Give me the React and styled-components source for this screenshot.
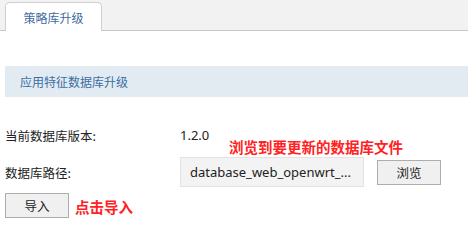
import React from "react";
import styled, { createGlobalStyle } from "styled-components";

const Global = createGlobalStyle`
  html, body { margin: 0; padding: 0; background: #fff; }
  body { font-family: "Noto Sans", "Noto Sans CJK SC", sans-serif; font-size: 12px; color: #222; }
  * { box-sizing: border-box; }
`;

const Page = styled.div`
  width: 468px;
  height: 234px;
  overflow: hidden;
  background: #fff;
`;

const TabStrip = styled.div`
  height: 31px;
  background: #f2f2f2;
  border-bottom: 1px solid #c8c8c8;
  display: flex;
  align-items: flex-end;
  padding-left: 5px;
`;

const Tab = styled.div`
  width: 97px;
  height: 29px;
  margin-bottom: -1px;
  background: #fff;
  border: 1px solid #cfcfcf;
  border-bottom: none;
  border-radius: 5px 5px 0 0;
  display: flex;
  align-items: center;
  justify-content: center;
  font-family: "Noto Sans CJK SC", sans-serif;
  font-size: 12px;
  color: #3e6b9e;
  padding-top: 1px;
`;

const Content = styled.div`
  padding-left: 5px;
`;

const SectionHeader = styled.div`
  margin-top: 35px;
  height: 31px;
  background: #e2ebf2;
  display: flex;
  align-items: center;
  padding-left: 15px;
  font-family: "Noto Sans CJK SC", sans-serif;
  font-size: 12px;
  color: #3a6ea5;
`;

const Row = styled.div`
  display: grid;
  grid-template-columns: 175px max-content max-content;
  justify-content: start;
  align-items: center;
  margin-top: ${(p) => p.$gap}px;
  height: ${(p) => p.$h}px;
`;

const Label = styled.div`
  font-family: "Noto Sans CJK SC", sans-serif;
  font-size: 12.5px;
  color: #222;
`;

const Value = styled.div`
  font-family: "Noto Sans", sans-serif;
  font-size: 13px;
  color: #222;
`;

const InputWrap = styled.div`
  position: relative;
`;

const FileBox = styled.div`
  width: 184px;
  height: 30px;
  background: #f3f3f3;
  border: 1px solid #e2e2e2;
  display: flex;
  align-items: center;
  padding-left: 9px;
  font-family: "Noto Sans", sans-serif;
  font-size: 13px;
  color: #222;
  white-space: nowrap;
  overflow: hidden;
`;

const Hint = styled.div`
  position: absolute;
  font-family: "Noto Sans CJK SC", sans-serif;
  font-weight: 700;
  font-size: 14.5px;
  line-height: 18px;
  color: #ff2222;
  white-space: nowrap;
  left: ${(p) => p.$left}px;
  top: ${(p) => p.$top}px;
`;

const Button = styled.button`
  width: 64px;
  height: 25px;
  margin-left: ${(p) => p.$ml || 0}px;
  background: #f0f0f0;
  border: 1px solid #adadad;
  border-radius: 0;
  padding: 0;
  font-family: "Noto Sans CJK SC", sans-serif;
  font-size: 12.5px;
  color: #222;
`;

const ActionRow = styled.div`
  display: flex;
  align-items: center;
  margin-top: 6px;
  gap: 6px;
`;

const InlineHint = styled.div`
  font-family: "Noto Sans CJK SC", sans-serif;
  font-weight: 700;
  font-size: 14.5px;
  color: #ff2222;
  margin-top: 2px;
`;

export default function App() {
  return (
    <Page>
      <Global />
      <TabStrip>
        <Tab>策略库升级</Tab>
      </TabStrip>
      <Content>
        <SectionHeader>应用特征数据库升级</SectionHeader>
        <Row $gap={28} $h={20}>
          <Label>当前数据库版本:</Label>
          <Value>1.2.0</Value>
        </Row>
        <Row $gap={12} $h={30}>
          <Label>数据库路径:</Label>
          <InputWrap>
            <FileBox>database_web_openwrt_...</FileBox>
            <Hint $left={49} $top={-19}>浏览到要更新的数据库文件</Hint>
          </InputWrap>
          <Button $ml={13}>浏览</Button>
        </Row>
        <ActionRow>
          <Button>导入</Button>
          <InlineHint>点击导入</InlineHint>
        </ActionRow>
      </Content>
    </Page>
  );
}
